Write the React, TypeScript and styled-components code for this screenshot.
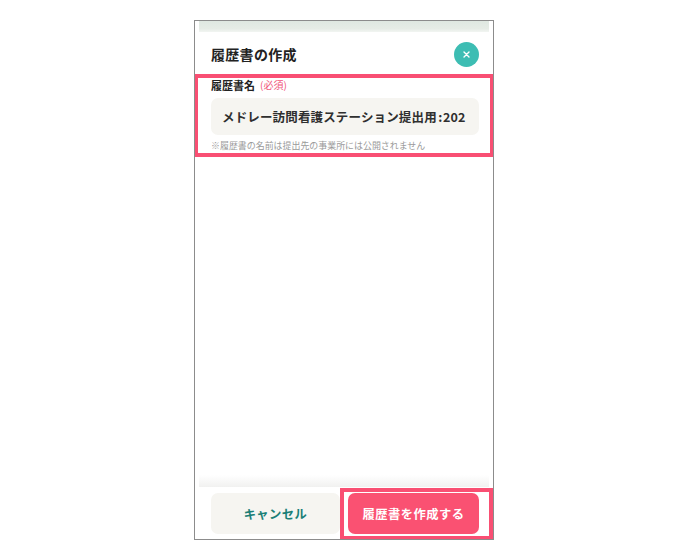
import React from "react";
import styled, { createGlobalStyle } from "styled-components";

const Global = createGlobalStyle`
  html, body { margin: 0; padding: 0; background: #fff; }
  body { font-family: "Noto Sans CJK JP", "Noto Sans", sans-serif; }
`;
const Page = styled.div`
  width: 686px; height: 560px; display: flex; justify-content: center; padding-top: 20px; box-sizing: border-box;
`;
const Phone = styled.div`
  position: relative; width: 300px; height: 520px; box-sizing: border-box; border: 1px solid #8c8c8c;
  margin-left: 2px; display: flex; flex-direction: column; background: #fff; overflow: hidden;
`;
const MapStrip = styled.div`
  height: 11px; margin: 0 4px; flex: none;
  background: linear-gradient(#dfe8e1, #e6ece6 70%, #f2f5f2);
`;
const Header = styled.header`
  height: 42px; flex: none; display: flex; align-items: center; justify-content: space-between;
  padding: 3px 14px 0 16px; box-sizing: border-box;
`;
const Title = styled.h1`
  margin: -2px 0 0; font-size: 14px; font-weight: 700; color: #222; line-height: 20px; letter-spacing: 0.3px;
`;
const CloseButton = styled.button`
  width: 25px; height: 25px; border: 0; padding: 0; border-radius: 50%; background: #3dbdb3;
  display: flex; align-items: center; justify-content: center;
`;
const Form = styled.section`
  padding: 3px 14px 0 16px; flex: 1; display: flex; flex-direction: column;
`;
const LabelRow = styled.div`
  display: flex; align-items: center; gap: 5px; height: 16px;
`;
const Label = styled.label`
  font-size: 11px; font-weight: 700; color: #222; line-height: 16px;
`;
const Required = styled.span`
  font-size: 10px; color: #f0567a; line-height: 16px;
`;
const NameField = styled.div`
  margin-top: 5px; height: 37px; border-radius: 7px; background: #f6f5f1; display: flex; align-items: center;
  padding: 0 13px 0 11px; font-size: 12.5px; font-weight: 700; color: #2f2f2f;
  white-space: nowrap; letter-spacing: 0.15px;
`;
const Colon = styled.span`
  margin: 0 0.5px 0 1.5px;
`;
const Hint = styled.p`
  margin: 5px 0 0; font-size: 8.95px; color: #9a9a9a; line-height: 12px; white-space: nowrap;
`;
const Fade = styled.div`
  height: 12px; margin: 0 4px; flex: none; background: linear-gradient(#fff, #f1f1f0);
`;
const Footer = styled.footer`
  flex: none; height: 52px; display: flex; gap: 8px; padding: 6px 14px 0 16px; box-sizing: border-box;
`;
const Button = styled.button<{ $primary?: boolean }>`
  flex: ${(p) => (p.$primary ? "0 0 131px" : "0 0 129px")}; height: 41px; border: 0; border-radius: 7px; padding: 0;
  font-family: inherit; font-size: 12.3px; font-weight: 700; letter-spacing: 0.45px;
  color: ${(p) => (p.$primary ? "#fff" : "#1b7f77")};
  background: ${(p) => (p.$primary ? "#fa5172" : "#f6f5f1")};
`;
const Highlight = styled.div<{ $left: number; $top: number; $w: number; $h: number }>`
  position: absolute; box-sizing: border-box; border: 4px solid #f94f73; pointer-events: none;
  left: ${(p) => p.$left}px; top: ${(p) => p.$top}px; width: ${(p) => p.$w}px; height: ${(p) => p.$h}px;
`;

export default function App() {
  return (
    <Page>
      <Global />
      <Phone>
        <MapStrip />
        <Header>
          <Title>履歴書の作成</Title>
          <CloseButton aria-label="閉じる">
            <svg width="7" height="7" viewBox="0 0 7 7">
              <path d="M1 1L6 6M6 1L1 6" stroke="#fff" strokeWidth="1.4" strokeLinecap="round" />
            </svg>
          </CloseButton>
        </Header>
        <Form>
          <LabelRow>
            <Label>履歴書名</Label>
            <Required>(必須)</Required>
          </LabelRow>
          <NameField>
            メドレー訪問看護ステーション提出用<Colon>:</Colon>202
          </NameField>
          <Hint>※履歴書の名前は提出先の事業所には公開されません</Hint>
        </Form>
        <Fade />
        <Footer>
          <Button>キャンセル</Button>
          <Button $primary>履歴書を作成する</Button>
        </Footer>
        <Highlight $left={-1} $top={53} $w={300} $h={83} />
        <Highlight $left={145} $top={467} $w={153} $h={52} />
      </Phone>
    </Page>
  );
}
